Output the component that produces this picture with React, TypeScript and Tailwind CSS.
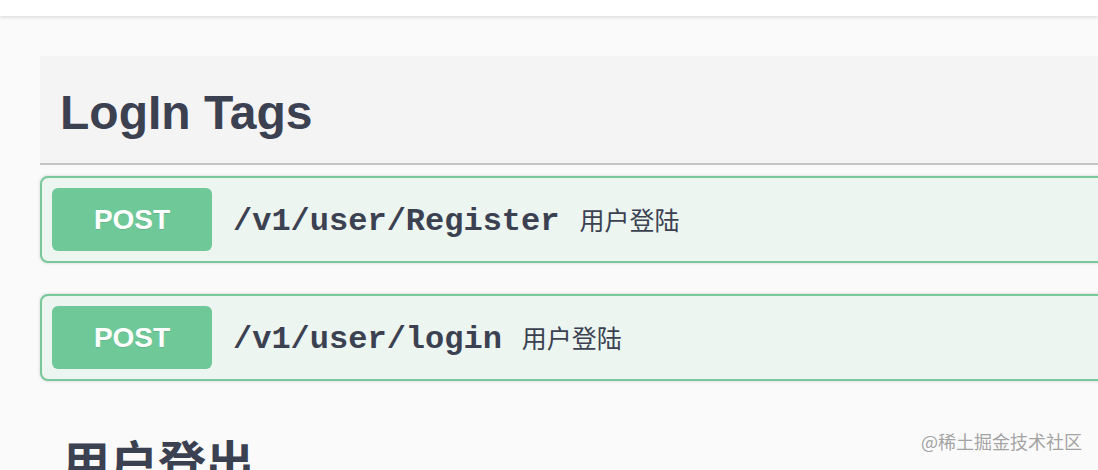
import React from "react";

function Op({ path, desc }: { path: string; desc: string }) {
  return (
    <div className="flex items-center rounded-[8px] border-2 border-[#78c89b] bg-[#ecf5f0] p-[10px] shadow-[0_0_3px_rgba(0,0,0,0.19)]">
      <div className="flex h-[63px] w-[160px] shrink-0 items-center justify-center rounded-[6px] bg-[#6fc898] pt-[1px] text-[28px] font-bold text-white [font-family:'Liberation_Sans',Arial,sans-serif] [text-shadow:0_1px_0_rgba(0,0,0,0.1)]">
        POST
      </div>
      <div className="ml-[21px] pt-[4px] text-[32px] font-bold text-[#3b4151] [font-family:'Liberation_Mono',monospace]">
        {path}
      </div>
      <div className="ml-[20px] pt-[1px] text-[25px] text-[#3b4151] [font-family:'Noto_Sans_CJK_SC',sans-serif]">
        {desc}
      </div>
    </div>
  );
}

export default function App() {
  return (
    <div className="relative h-[470px] w-full overflow-hidden bg-[#fafafa]">
      <div className="h-[16px] bg-white shadow-[0_1px_4px_rgba(0,0,0,0.15)]" />
      <div className="w-[1200px] pl-[40px] pt-[40px]">
        <div className="flex h-[109px] items-center border-b-2 border-[#c4c4c4] bg-[#f4f4f5] pl-[20px] pt-[6px] text-[48px] font-bold text-[#3b4151] [font-family:'Liberation_Sans',Arial,sans-serif]">
          LogIn Tags
        </div>
        <div className="mt-[11px] flex flex-col gap-[31px]">
          <Op path="/v1/user/Register" desc="用户登陆" />
          <Op path="/v1/user/login" desc="用户登陆" />
        </div>
        <div className="mt-[55px] pl-[22px] text-[48px] leading-[48px] font-bold text-[#3b4151] [font-family:'Noto_Sans_CJK_SC',sans-serif]">
          用户登出
        </div>
      </div>
      <div className="absolute left-[921px] top-[429px] text-[18px] leading-[24px] text-[#a3a3a3] [font-family:'Noto_Sans_CJK_SC',sans-serif] [text-shadow:0_0_2px_#fff]">
        @稀土掘金技术社区
      </div>
    </div>
  );
}
